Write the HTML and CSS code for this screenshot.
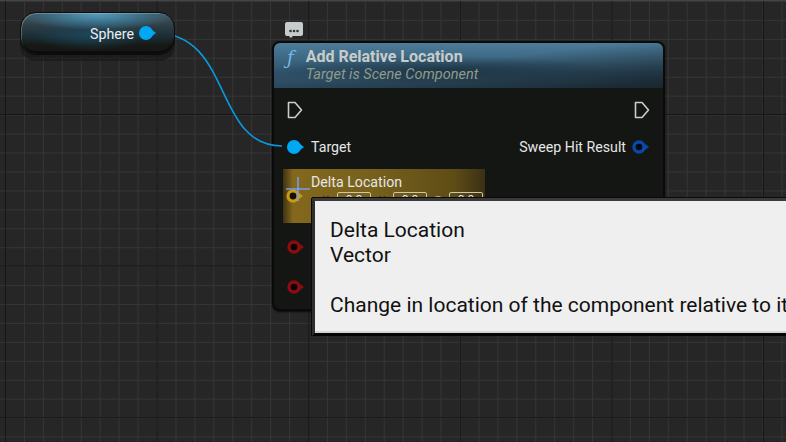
FILE: index.html

```html
<!DOCTYPE html>
<html lang="en">
<head>
  <meta charset="UTF-8" />
  <title>Blueprint Graph</title>
  <link rel="stylesheet" href="styles.css">
</head>
<body>
  <div class="graph">

    <svg class="wire" width="786" height="442" viewBox="0 0 786 442">
      <path d="M155 33 C 233 33, 213 146, 282 146" fill="none" stroke="#0a99dd" stroke-width="1.6" />
    </svg>

    <div class="var-node">
      <span class="var-label">Sphere</span>
      <svg class="pin" width="18" height="14" viewBox="0 0 18 14">
        <circle cx="7" cy="7" r="7" fill="#00a8f4" />
        <path d="M13 4 L17 7 L13 10 Z" fill="#00a8f4" />
      </svg>
    </div>

    <svg class="bubble" width="20" height="18" viewBox="0 0 20 18">
      <path d="M3 1 H17 Q19 1 19 3 V13 Q19 15 17 15 H9 L7 17 L5 15 H3 Q1 15 1 13 V3 Q1 1 3 1 Z" fill="#c6cccc" />
      <circle cx="6.5" cy="10" r="1.3" fill="#333" />
      <circle cx="10" cy="10" r="1.3" fill="#333" />
      <circle cx="13.5" cy="10" r="1.3" fill="#333" />
    </svg>

    <div class="fn-node">
      <div class="fn-header">
        <span class="fn-icon">&#x192;</span>
        <div>
          <div class="fn-title">Add Relative Location</div>
          <div class="fn-sub">Target is Scene Component</div>
        </div>
      </div>
      <div class="fn-body">
        <div class="row row-exec">
          <svg width="16" height="18" viewBox="0 0 16 18"><path d="M1.5 1.5 H8 L14.5 9 L8 16.5 H1.5 Z" fill="none" stroke="#ccc" stroke-width="1.6" stroke-linejoin="round" /></svg>
          <svg width="16" height="18" viewBox="0 0 16 18"><path d="M1.5 1.5 H8 L14.5 9 L8 16.5 H1.5 Z" fill="none" stroke="#ccc" stroke-width="1.6" stroke-linejoin="round" /></svg>
        </div>
        <div class="row row-target">
          <div class="pin-group">
            <svg width="18" height="14" viewBox="0 0 18 14">
              <circle cx="7" cy="7" r="7" fill="#00a8f4" />
              <path d="M13 4 L17 7 L13 10 Z" fill="#00a8f4" />
            </svg>
            <span class="pin-label">Target</span>
          </div>
          <div class="pin-group">
            <span class="pin-label">Sweep Hit Result</span>
            <svg width="18" height="14" viewBox="0 0 18 14">
              <circle cx="7" cy="7" r="5" fill="#040810" stroke="#0a48a8" stroke-width="3.4" />
              <path d="M13 4 L17 7 L13 10 Z" fill="#0a48a8" />
            </svg>
          </div>
        </div>
        <div class="delta">
          <svg class="delta-pin" width="18" height="14" viewBox="0 0 18 14">
            <circle cx="7" cy="7" r="5" fill="#141008" stroke="#c89c10" stroke-width="3.2" />
            <path d="M13 4 L17 7 L13 10 Z" fill="#c89c10" />
          </svg>
          <svg class="cursor" width="24" height="24" viewBox="0 0 24 24">
            <path d="M12 0 V24 M0 12 H24" stroke="#7c9af0" stroke-width="1.6" fill="none" />
          </svg>
          <div class="delta-text">
            <div class="pin-label">Delta Location</div>
            <div class="delta-fields">
              <span class="axis">X</span><span class="field">0.0</span>
              <span class="axis">Y</span><span class="field">0.0</span>
              <span class="axis axis-z">Z</span><span class="field">0.0</span>
            </div>
          </div>
        </div>
        <div class="row row-red">
          <svg width="18" height="14" viewBox="0 0 18 14">
            <circle cx="7" cy="7" r="5" fill="#0c0404" stroke="#8a0c10" stroke-width="3.4" />
            <path d="M13 4 L17 7 L13 10 Z" fill="#8a0c10" />
          </svg>
        </div>
        <div class="row row-red">
          <svg width="18" height="14" viewBox="0 0 18 14">
            <circle cx="7" cy="7" r="5" fill="#0c0404" stroke="#8a0c10" stroke-width="3.4" />
            <path d="M13 4 L17 7 L13 10 Z" fill="#8a0c10" />
          </svg>
        </div>
      </div>
    </div>

    <div class="tooltip">
      <div>Delta Location</div>
      <div>Vector</div>
      <div class="tip-gap">Change in location of the component relative to its</div>
    </div>

  </div>
</body>
</html>
```

FILE: styles.css

```css
html, body {
  margin: 0;
  padding: 0;
}
body {
  width: 786px;
  height: 442px;
  overflow: hidden;
  font-family: Roboto, sans-serif;
}
.graph {
  position: relative;
  width: 786px;
  height: 442px;
  overflow: hidden;
  background-color: #262626;
  background-image:
    linear-gradient(to bottom, #444 1px, transparent 1px),
    linear-gradient(to right, #161616 1px, transparent 1px),
    linear-gradient(to bottom, #161616 1px, transparent 1px),
    linear-gradient(to right, #353535 1px, transparent 1px),
    linear-gradient(to bottom, #353535 1px, transparent 1px);
  background-size: 786px 442px, 151.6px 151.6px, 151.6px 151.6px, 18.95px 18.95px, 18.95px 18.95px;
  background-repeat: no-repeat, repeat, repeat, repeat, repeat;
  background-position: 0 0, 5px 0, 0 114px, 5px 0, 0 1px;
}
.wire {
  position: absolute;
  left: 0;
  top: 0;
  z-index: 2;
}

/* variable node */
.var-node {
  position: absolute;
  left: 20px;
  top: 12px;
  width: 155px;
  height: 42px;
  box-sizing: border-box;
  padding: 0 17px 1px 0;
  display: flex;
  align-items: flex-start;
  justify-content: flex-end;
  gap: 5px;
  border: 1px solid #0c0c0c;
  border-radius: 16px;
  background:
    radial-gradient(ellipse 80px 16px at 50% 1px, rgba(84,160,196,0.95), rgba(56,110,136,0.75) 65%, transparent 100%),
    radial-gradient(ellipse 60px 15px at 45% 22px, rgba(28,72,92,0.9), transparent 100%),
    linear-gradient(to bottom, #48565c 0, #2a3a42 15px, #1a2c34 24px, #161816 32px);
  box-shadow: inset 1px 1px 0 rgba(190,205,210,0.35), inset 0 -2px 0 #0c0c0c, 0 1px 0 #0c0c0c, 0 7px 0 rgba(18,18,18,0.5);
  z-index: 3;
}
.var-label {
  color: #eee;
  font-size: 14.2px;
  line-height: 17px;
  margin-top: 13px;
}
.var-node .pin {
  margin-top: 13px;
}

.bubble {
  position: absolute;
  left: 284px;
  top: 21px;
}

/* function node */
.fn-node {
  position: absolute;
  left: 272px;
  top: 41px;
  width: 393px;
  height: 270px;
  box-sizing: border-box;
  border: 2px solid #0a0a0a;
  border-radius: 8px;
  background: #141614;
  box-shadow: 0 1px 2px #0a0a0a;
  overflow: hidden;
}
.fn-header {
  height: 45px;
  box-sizing: border-box;
  padding: 5px 0 0 13px;
  display: flex;
  gap: 12px;
  background:
    radial-gradient(ellipse 170px 14px at 170px 27px, rgba(26,48,62,0.8), transparent),
    linear-gradient(to bottom right, transparent 45%, rgba(18,26,30,0.75) 100%),
    linear-gradient(to bottom, #4c7c99 0, #3f6a86 14px, #2f5068 30px, #2c4a60 45px);
}
.fn-icon {
  color: #72b8ea;
  font-family: "DejaVu Serif", serif;
  font-style: italic;
  font-size: 18px;
  line-height: 20px;
}
.fn-title {
  color: #c8ccc8;
  font-weight: 700;
  font-size: 16px;
  line-height: 17px;
}
.fn-sub {
  color: #8f9c88;
  font-style: italic;
  font-size: 14.5px;
  line-height: 19px;
}
.fn-body {
  padding: 13px 13px 0 13px;
}
.row {
  display: flex;
  justify-content: space-between;
}
.row-exec {
  height: 18px;
}
.row-target {
  margin-top: 19px;
  height: 18px;
  align-items: center;
}
.pin-group {
  display: flex;
  align-items: center;
  gap: 6px;
}
.pin-label {
  color: #e6e6e6;
  font-size: 14.2px;
  line-height: 17px;
}

/* highlighted vector pin */
.delta {
  position: relative;
  width: 202px;
  height: 54px;
  margin: 13px 0 0 -4px;
  padding: 5px 0 0 28px;
  box-sizing: border-box;
  background: linear-gradient(to right, #3e3212 0, #83681c 10px, #76601c 45%, #5e4c16 85%, #3a3014 100%);
}
.delta-pin {
  position: absolute;
  left: 3px;
  top: 20px;
}
.cursor {
  position: absolute;
  left: 3px;
  top: 8px;
}
.delta-fields {
  display: flex;
  align-items: center;
  margin-top: 1px;
  padding-left: 4px;
}
.axis {
  color: #2a2410;
  font-size: 10px;
  width: 22px;
  text-align: center;
}
.axis-z {
  color: #b8ac88;
}
.field {
  width: 34px;
  height: 16px;
  box-sizing: border-box;
  border: 1px solid #cfc8a8;
  border-radius: 2px;
  color: #eee;
  font-size: 12px;
  line-height: 15px;
  text-align: center;
}
.row-red {
  height: 14px;
  margin-top: 26px;
}
.delta + .row-red {
  margin-top: 17px;
}

/* tooltip */
.tooltip {
  position: absolute;
  left: 312px;
  top: 198px;
  width: 500px;
  height: 138px;
  box-sizing: border-box;
  padding: 17px 0 0 15px;
  border-left: 3px solid #2e2e2e;
  border-top: 3px solid #3a3a3a;
  border-bottom: 3px solid #050505;
  background: #efefef;
  box-shadow: inset 0 -2px 0 #d4d4d4, -1px 0 0 #0a0a0a, 0 -1px 0 #0a0a0a;
  color: #111;
  font-size: 21px;
  line-height: 25px;
  white-space: nowrap;
  z-index: 4;
}
.tip-gap {
  margin-top: 25px;
}
```
